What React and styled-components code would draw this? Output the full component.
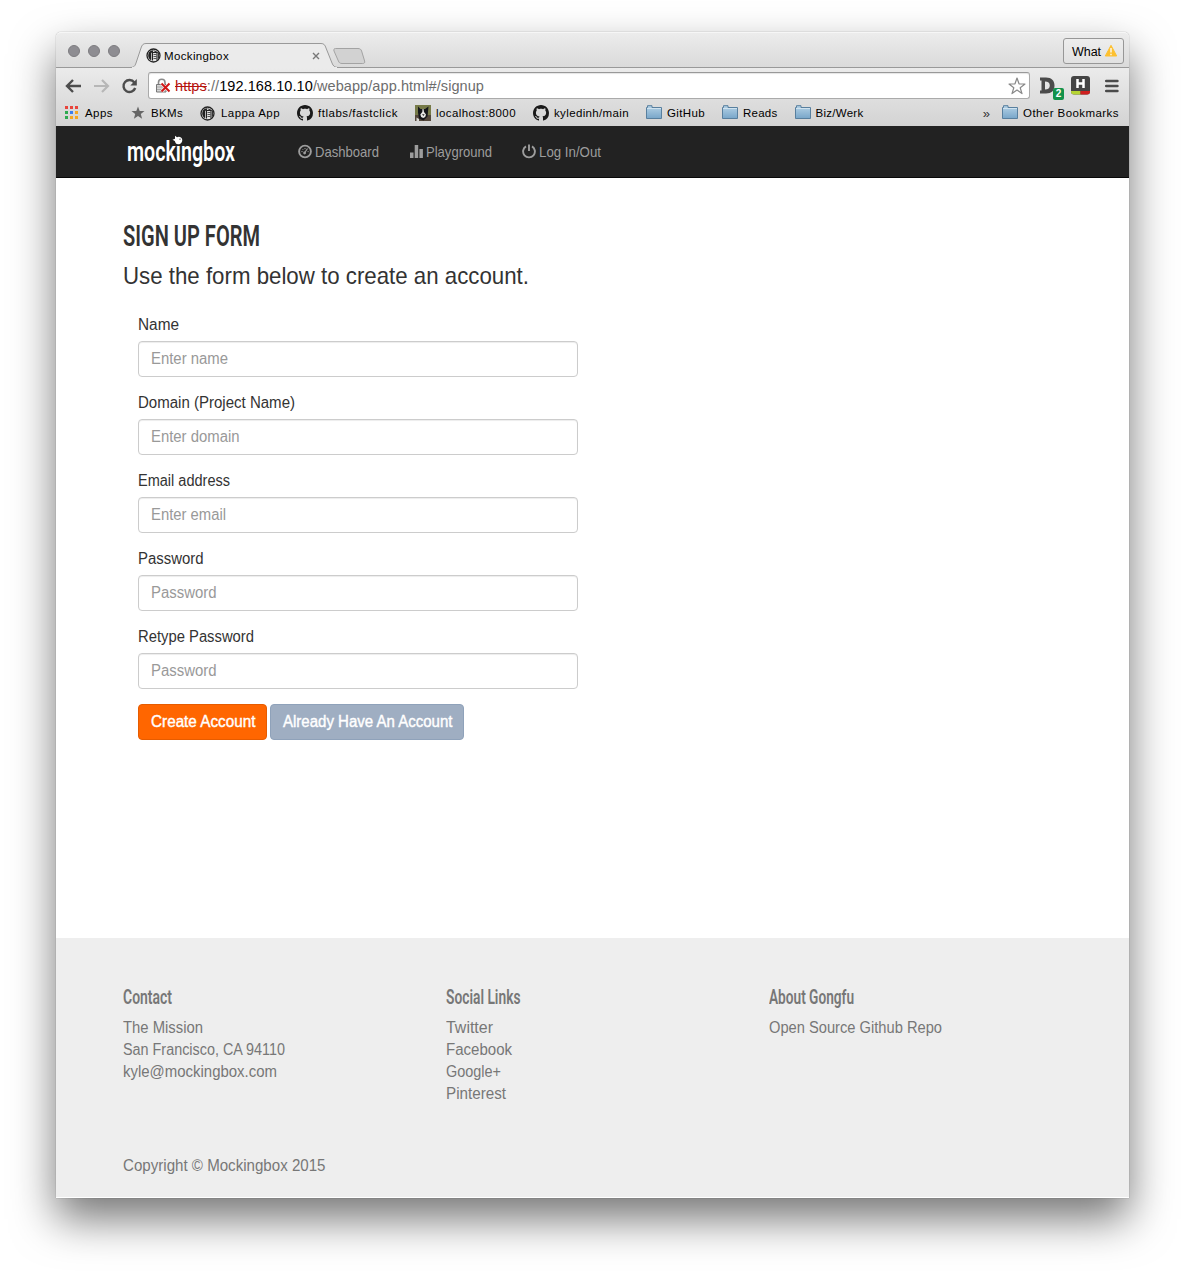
import React, { useLayoutEffect, useRef, useState } from "react";
import styled, { createGlobalStyle } from "styled-components";

const ui = '"Liberation Sans", Arial, sans-serif';
const display = 'Roboto, "Liberation Sans", sans-serif';

const GlobalStyle = createGlobalStyle`
  *, *::before, *::after { box-sizing: border-box; }
  html, body { margin: 0; background: #fff; }
  body { height: 1277px; overflow: hidden; font-family: ${ui}; }
`;

/* Text set to an exact measure, either condensed or tracked */
const Measure = styled.span`
  display: inline-block;
  flex: none;
  white-space: nowrap;
`;
const Glyphs = styled.span`
  display: inline-block;
  transform-origin: 0 50%;
`;
function Fit({ w, track, children, className }) {
  const ref = useRef(null);
  const [style, setStyle] = useState({});
  useLayoutEffect(() => {
    const exact = ref.current.getBoundingClientRect().width;
    const count = ref.current.textContent.length;
    setStyle(track ? { letterSpacing: `${(w - exact) / count}px` } : { transform: `scaleX(${w / exact})` });
  }, [w, track]);
  return (
    <Measure className={className} style={{ width: w }}>
      <Glyphs ref={ref} style={style}>{children}</Glyphs>
    </Measure>
  );
}

const Desktop = styled.div`
  height: 1277px;
  padding: 32px 56px 79px;
  background: #fff;
`;
const Window = styled.div`
  width: 1073px;
  height: 1166px;
  display: flex;
  flex-direction: column;
  border-radius: 5px 5px 0 0;
  background: #fff;
  box-shadow: 0 0 1px rgba(0, 0, 0, 0.55), 0 21px 44px rgba(0, 0, 0, 0.54);
`;

/* Browser chrome */
const Chrome = styled.div`
  height: 94px;
  flex: none;
  border-radius: 5px 5px 0 0;
  border-top: 1px solid #f6f6f6;
  background: linear-gradient(#ececec, #dadada 34px, #ebebeb 35px, #d3d3d3 93px);
  color: #000;
`;
const TabStrip = styled.div`
  height: 35px;
  display: flex;
  align-items: flex-start;
  border-bottom: 1px solid #999;
`;
const Lights = styled.div`
  display: flex;
  gap: 8px;
  padding: 12px 0 0 12px;
  width: 74px;
`;
const Light = styled.i`
  width: 12px;
  height: 12px;
  border-radius: 50%;
  background: #8e8d92;
  border: 1px solid #7d7c80;
`;
const Tab = styled.div`
  position: relative;
  display: flex;
  align-items: center;
  width: 210px;
  height: 35px;
  padding: 11px 0 1px 16px;
  font-size: 11.5px;
  line-height: 16px;
`;
const TabShape = styled.svg`
  position: absolute;
  left: 0;
  top: 10px;
`;
const TabBody = styled.div`
  position: relative;
  display: flex;
  align-items: center;
  gap: 3px;
  svg:last-child { margin-left: 80px; }
`;
const NewTab = styled.svg`
  margin: 14px 0 0 -8px;
`;
const Profile = styled.div`
  display: flex;
  align-items: center;
  gap: 3px;
  width: 61px;
  height: 26px;
  margin: 5px 5px 0 auto;
  padding-left: 8px;
  border: 1px solid #979797;
  border-radius: 3px;
  background: linear-gradient(#ededed, #e1e1e1);
  font-size: 12.5px;
  line-height: 16px;
  padding-top: 1px;
  svg { margin-top: -2px; }
`;
const Toolbar = styled.div`
  height: 35px;
  display: flex;
  align-items: center;
  padding: 0 10px 0 9px;
`;
const NavIcon = styled.svg`
  flex: none;
  margin-right: ${(p) => p.$gap || 0}px;
`;
const Omnibox = styled.div`
  display: flex;
  align-items: center;
  flex: none;
  width: 882px;
  height: 27px;
  padding: 0 3px 0 6px;
  border: 1px solid #aaa;
  border-top-color: #999;
  border-radius: 3px;
  background: #fff;
  box-shadow: inset 0 1px 1px #e5e5e5;
  font-size: 14.5px;
  color: #6d6d6d;
`;
const Lock = styled.svg`
  margin-right: 4px;
`;
const Scheme = styled.span`
  color: #b5130e;
  text-decoration: line-through;
`;
const Host = styled.span`
  color: #000;
`;
const Star = styled.svg`
  margin-left: auto;
`;
const Badge = styled.span`
  flex: none;
  width: 11px;
  height: 12px;
  margin: 17px 7px 0 -4px;
  border-radius: 2px;
  background: #12924a;
  color: #fff;
  font-size: 10px;
  font-weight: 700;
  line-height: 12px;
  text-align: center;
`;
const Bookmarks = styled.div`
  display: flex;
  align-items: center;
  gap: 17px;
  height: 20px;
  padding: 0 10px 0 8px;
  font-size: 11.5px;
`;
const BookmarkItem = styled.div`
  display: flex;
  align-items: center;
  gap: 4px;
`;
const IconSlot = styled.span`
  display: flex;
  align-items: center;
  width: 17px;
  height: 17px;
`;
const Overflow = styled.span`
  margin-left: auto;
  margin-right: -5px;
  font-size: 13px;
  color: #333;
`;

/* Page */
const Navbar = styled.nav`
  height: 52px;
  flex: none;
  display: flex;
  align-items: center;
  padding-left: 71px;
  background: #222;
  border-bottom: 1px solid #080808;
  color: #9d9d9d;
  font-size: 15px;
`;
const Brand = styled.div`
  position: relative;
  width: 171px;
  height: 52px;
  padding-top: 9px;
  color: #fff;
  font-family: ${display};
  font-size: 27px;
  line-height: 34px;
  font-weight: 600;
`;
const Bird = styled.svg`
  position: absolute;
  left: 44px;
  top: 9px;
`;
const NavLink = styled.a`
  display: flex;
  align-items: center;
  gap: 3px;
  margin-right: ${(p) => p.$gap || 0}px;
  line-height: 20px;
  svg { flex: none; }
`;
const Main = styled.main`
  height: 760px;
  flex: none;
  padding: 39px 66px 0 66.5px;
  background: #fff;
  color: #333;
`;
const Title = styled.h1`
  margin: 0;
  font-family: ${display};
  font-size: 30px;
  line-height: 37px;
  font-weight: 600;
`;
const Lead = styled.p`
  margin: 8px 0 0;
  font-size: 24px;
  line-height: 28px;
`;
const Form = styled.div`
  width: 455.5px;
  padding: 24px 0 0 15.5px;
`;
const Group = styled.div`
  margin-bottom: 15px;
`;
const Label = styled.label`
  display: block;
  height: 22px;
  margin: 0 0 5px -0.5px;
  font-size: 16px;
  line-height: 22px;
`;
const Field = styled.div`
  height: 36px;
  padding: 0 11.5px;
  border: 1px solid #ccc;
  border-radius: 4px;
  background: #fff;
  box-shadow: inset 0 1px 1px rgba(0, 0, 0, 0.075);
  color: #999;
  font-size: 16px;
  line-height: 33px;
`;
const Actions = styled.div`
  display: flex;
  gap: 3px;
`;
const Button = styled.div`
  height: 36px;
  padding: 0 11px 0 11.5px;
  border: 1px solid ${(p) => (p.$primary ? "#e65c00" : "#8fa2ba")};
  border-radius: 4px;
  background: ${(p) => (p.$primary ? "#f60" : "#9faec2")};
  color: #fff;
  font-size: 16px;
  line-height: 33px;
  -webkit-text-stroke: 0.4px #fff;
`;
const Footer = styled.footer`
  height: 259px;
  flex: none;
  padding: 46px 66px 0 66.5px;
  background: #eee;
  color: #777;
  font-size: 16px;
  line-height: 22px;
`;
const Columns = styled.div`
  display: grid;
  grid-template-columns: repeat(3, 323.3px);
  height: 171px;
`;
const ColumnTitle = styled.h4`
  height: 27px;
  margin: 0 0 6px;
  font-family: ${display};
  font-size: 19.5px;
  line-height: 27px;
  font-weight: 600;
`;
const Line = styled.div`
  height: 22px;
`;

const Mark = () => (
  <svg width="15" height="15" viewBox="0 0 15 15">
    <circle cx="7.500" cy="7.500" r="6.500" fill="#e4e4e4" stroke="#222" strokeWidth="1.300" />
    <path d="M2.200 7.500a5.300 5.300 0 0 1 4.800-5.300v1.500L5.200 5v7.300A5.300 5.300 0 0 1 2.200 7.500z" fill="#222" />
    <path d="M6.500 12.500v-8h4.500v8" fill="none" stroke="#222" strokeWidth="1.100" />
    <path d="M7.500 6.500h3M7.500 8.500h3M7.500 10.500h3" stroke="#444" strokeWidth=".9" />
    <path d="M7.500 2.700l5 2v6" fill="none" stroke="#222" strokeWidth=".9" />
  </svg>
);
const Folder = () => (
  <svg width="17" height="17" viewBox="0 0 17 17">
    <defs>
      <linearGradient id="folder" x1="0" y1="0" x2="0" y2="1">
        <stop offset="0" stopColor="#b5d2e6" />
        <stop offset="1" stopColor="#78a6c9" />
      </linearGradient>
    </defs>
    <path d="M.5 13.500V2.500h1V.7h4.500v1.800h9.500v11z" fill="url(#folder)" stroke="#587f9e" />
    <path d="M1 3.500h14" stroke="#cfe2ef" />
  </svg>
);
const Octocat = () => (
  <svg width="17" height="17" viewBox="0 0 17 17">
    <path fill="#1a1a1a" d="M8 0C3.58 0 0 3.58 0 8c0 3.54 2.29 6.53 5.47 7.59.4.07.55-.17.55-.38 0-.19-.01-.82-.01-1.49-2.01.37-2.53-.49-2.69-.94-.09-.23-.48-.94-.82-1.13-.28-.15-.68-.52-.01-.53.63-.01 1.08.58 1.23.82.72 1.21 1.87.87 2.33.66.07-.52.28-.87.51-1.07-1.78-.2-3.64-.89-3.64-3.95 0-.87.31-1.59.82-2.15-.08-.2-.36-1.02.08-2.12 0 0 .67-.21 2.2.82.64-.18 1.32-.27 2-.27s1.36.09 2 .27c1.53-1.04 2.2-.82 2.2-.82.44 1.1.16 1.92.08 2.12.51.56.82 1.27.82 2.15 0 3.07-1.87 3.75-3.65 3.95.29.25.54.73.54 1.48 0 1.07-.01 1.93-.01 2.2 0 .21.15.46.55.38A8.01 8.01 0 0 0 16 8c0-4.42-3.58-8-8-8z" />
  </svg>
);
const AppsGrid = () => (
  <svg width="17" height="17" viewBox="0 0 17 17">
    {["#e8453c", "#e8453c", "#e8453c", "#2da94f", "#3a7df0", "#f5a623", "#2da94f", "#f5a623", "#f5a623"].map((c, i) => (
      <rect key={i} x={1 + (i % 3) * 5} y={1 + Math.floor(i / 3) * 5} width="3" height="3" fill={c} />
    ))}
  </svg>
);
const SolidStar = () => (
  <svg width="17" height="17" viewBox="0 0 17 17">
    <path fill="#666" d="M8 1.500l1.700 4.400 4.800.2-3.700 3 1.300 4.600L8 11.100 3.900 13.700l1.300-4.600-3.700-3 4.800-.2z" />
  </svg>
);
const Dog = () => (
  <svg width="17" height="17" viewBox="0 0 17 17">
    <path fill="#767a48" d="M0 0h16v16H0z" />
    <path fill="#54473b" d="M0 10h16v6H0z" />
    <path fill="#15161a" d="M3 1.500l2.500 2.500h4.500l3.500-2.500-.5 5-.5 5-4 4-4.500-2-1-6z" />
    <path fill="#e8e8e6" d="M7.500 4h1l.5 3 2 2.500-.8 2.500-2 1-2-1-.9-2.500 2-2.500z" />
    <path fill="#222" d="M7 9.200h2.600l-1.200 1.900z" />
    <path fill="#d8d8d4" d="M1.500 12.500l2.500 1.500v2H1.500z" />
  </svg>
);

const bookmarks = [
  [AppsGrid, "Apps", 28],
  [SolidStar, "BKMs", 32],
  [Mark, "Lappa App", 59],
  [Octocat, "ftlabs/fastclick", 80],
  [Dog, "localhost:8000", 80],
  [Octocat, "kyledinh/main", 75],
  [Folder, "GitHub", 38],
  [Folder, "Reads", 34.5],
  [Folder, "Biz/Werk", 48],
];

const Bookmark = ({ icon: Icon, text, w }) => (
  <BookmarkItem>
    <IconSlot><Icon /></IconSlot>
    <Fit w={w} track>{text}</Fit>
  </BookmarkItem>
);

const fields = [
  ["Name", 41, "Enter name", 77],
  ["Domain (Project Name)", 157, "Enter domain", 88.5],
  ["Email address", 92, "Enter email", 75],
  ["Password", 65.5, "Password", 65.5],
  ["Retype Password", 116, "Password", 65.5],
];

const columns = [
  ["Contact", 49, [["The Mission", 80], ["San Francisco, CA 94110", 162], ["kyle@mockingbox.com", 154]]],
  ["Social Links", 74.5, [["Twitter", 47], ["Facebook", 66], ["Google+", 55], ["Pinterest", 60]]],
  ["About Gongfu", 85, [["Open Source Github Repo", 173]]],
];

export default function App() {
  return (
    <Desktop>
      <GlobalStyle />
      <Window>
        <Chrome>
          <TabStrip>
            <Lights><Light /><Light /><Light /></Lights>
            <Tab>
              <TabShape width="212" height="25" viewBox="0 0 212 25">
                <path d="M0 24.500C4 24.500 5 23 6 20L11 5C12 2 13 .5 16 .5H191c3 0 4 1.500 5 4.500l6 15c1 3 3 4.500 6 4.500" fill="#ebebeb" stroke="#999" />
                <path d="M2 24.500H207" stroke="#ebebeb" />
              </TabShape>
              <TabBody>
                <Mark />
                <Fit w={65} track>Mockingbox</Fit>
                <svg width="8" height="8" viewBox="0 0 8 8"><path d="M1 1l6 6M7 1L1 7" stroke="#777" strokeWidth="1.400" /></svg>
              </TabBody>
            </Tab>
            <NewTab width="34" height="18" viewBox="0 0 34 18">
              <path d="M3.500 1.500H26c2 0 3 .8 3.600 2.500l3 10c.5 1.800-.3 2.500-2 2.500H10c-2 0-3-.8-3.600-2.500L2 4C1.500 2.500 2 1.500 3.500 1.500z" fill="#d2d2d2" stroke="#a3a3a3" />
            </NewTab>
            <Profile>
              <Fit w={29} track>What</Fit>
              <svg width="14" height="13" viewBox="0 0 14 13">
                <path d="M7 1.300L12.700 12H1.300z" fill="#fdc02f" stroke="#fdc02f" strokeLinejoin="round" />
                <path d="M7 4v4.500M7 9.800v1.500" stroke="#fff" strokeWidth="1.300" />
              </svg>
            </Profile>
          </TabStrip>
          <Toolbar>
            <NavIcon $gap={11} width="17" height="16" viewBox="0 0 17 16">
              <path d="M8 2L2 8l6 6M2.500 8H16" fill="none" stroke="#4d4d4d" strokeWidth="2.400" />
            </NavIcon>
            <NavIcon $gap={11} width="17" height="16" viewBox="0 0 17 16">
              <path d="M9 2l6 6-6 6M14.500 8H1" fill="none" stroke="#b7b7b7" strokeWidth="2.200" />
            </NavIcon>
            <NavIcon $gap={10} width="17" height="16" viewBox="0 0 17 16">
              <path d="M13.300 4.400A6 6 0 1 0 14.200 10" fill="none" stroke="#4d4d4d" strokeWidth="2.400" />
              <path d="M15.800 1v6.500H9.300z" fill="#4d4d4d" />
            </NavIcon>
            <Omnibox>
              <Lock width="16" height="16" viewBox="0 0 16 16">
                <path d="M3.500 7V4.500a3 3 0 0 1 6.500 0V7" fill="none" stroke="#8b8b8b" strokeWidth="1.600" />
                <path d="M1.500 6.500H11V14H1.500z" fill="#d6d6d6" stroke="#777" />
                <path d="M2 9h8M2 11.500h8" stroke="#aaa" />
                <path d="M6.500 5.500l8 8M14.500 5.500l-8 8" stroke="#fff" strokeWidth="3" />
                <path d="M6.500 5.500l8 8M14.500 5.500l-8 8" stroke="#d01717" strokeWidth="2" />
              </Lock>
              <Fit w={309} track><Scheme>https</Scheme>://<Host>192.168.10.10</Host>/webapp/app.html#/signup</Fit>
              <Star width="18" height="18" viewBox="0 0 18 18">
                <path d="M9 1l2 5.800 6 .2-4.800 3.700L14 16.600l-5-3.500-5 3.500 1.800-5.900L1 7l6-.2z" fill="#fff" stroke="#888" strokeWidth="1.200" strokeLinejoin="round" />
              </Star>
            </Omnibox>
            <NavIcon width="27" height="26" viewBox="0 0 27 26">
              <path fillRule="evenodd" fill="#4b4b4b" d="M10 4.500h6c5.500 0 8.500 3 8.500 8s-3 8-8.500 8h-6v-3h1.500v-10H10zM15 8.500v8c3.200 0 4.800-1.500 4.800-4s-1.600-4-4.800-4z" />
            </NavIcon>
            <Badge>2</Badge>
            <NavIcon $gap={14} width="20" height="20" viewBox="0 0 20 20">
              <rect width="19" height="18.500" rx="3" fill="#444" />
              <path d="M0 15h9.500v3.500H3a3 3 0 0 1-3-3z" fill="#b6d433" />
              <path d="M9.500 15H19v.5a3 3 0 0 1-3 3H9.500z" fill="#cf1f1f" />
              <path d="M6.500 3v9M12.500 3v9M6.500 7.500h6" stroke="#fff" strokeWidth="2.500" />
            </NavIcon>
            <NavIcon width="14" height="14" viewBox="0 0 14 14">
              <path d="M1.200 2h11.200M1.200 7h11.200M1.200 12h11.200" stroke="#4b4b4b" strokeWidth="2.600" strokeLinecap="round" />
            </NavIcon>
          </Toolbar>
          <Bookmarks>
            {bookmarks.map(([icon, text, w]) => <Bookmark key={text} icon={icon} text={text} w={w} />)}
            <Overflow>»</Overflow>
            <Bookmark icon={Folder} text="Other Bookmarks" w={96} />
          </Bookmarks>
        </Chrome>

        <Navbar>
          <Brand>
            <Fit w={108}>mockingbox</Fit>
            <Bird width="12" height="11" viewBox="0 0 12 11">
              <path fill="#fff" d="M1.500 4.700L4 3.800 4 .8 6 2.300C7.500 1.200 10.800 1.700 11.200 4.500c.4 2.600-1.400 4.800-4 4.800C4.800 9.300 4.300 7.300 3.800 6z" />
              <circle cx="9" cy="4.200" r=".6" fill="#222" />
            </Bird>
          </Brand>
          <NavLink $gap={31}>
            <svg width="14" height="16" viewBox="0 0 14 16">
              <circle cx="7" cy="7.500" r="5.900" fill="none" stroke="#9d9d9d" strokeWidth="1.900" />
              <path d="M6.500 9L9.500 4.500" stroke="#9d9d9d" strokeWidth="1.200" />
              <circle cx="6.600" cy="9" r="1.400" fill="#9d9d9d" />
              <path d="M3.400 7.600h1.200M4.600 5.200l.8.800M7 4v1.200M9.600 7.600h1" stroke="#9d9d9d" />
            </svg>
            <Fit w={64}>Dashboard</Fit>
          </NavLink>
          <NavLink $gap={30}>
            <svg width="13" height="16" viewBox="0 0 13 16">
              <path d="M0 8.500h3.500V14H0zM4.700 1h3.500v13H4.700zM9.400 5h3.500v9H9.400z" fill="#9d9d9d" />
            </svg>
            <Fit w={66}>Playground</Fit>
          </NavLink>
          <NavLink>
            <svg width="14" height="16" viewBox="0 0 14 16">
              <path d="M4 2.400a5.900 5.900 0 1 0 6 0M7 .5V7" fill="none" stroke="#9d9d9d" strokeWidth="1.900" />
            </svg>
            <Fit w={62}>Log In/Out</Fit>
          </NavLink>
        </Navbar>

        <Main>
          <Title><Fit w={137}>SIGN UP FORM</Fit></Title>
          <Lead><Fit w={406}>Use the form below to create an account.</Fit></Lead>
          <Form>
            {fields.map(([label, lw, hint, hw]) => (
              <Group key={label}>
                <Label><Fit w={lw}>{label}</Fit></Label>
                <Field><Fit w={hw}>{hint}</Fit></Field>
              </Group>
            ))}
            <Actions>
              <Button $primary><Fit w={104.5}>Create Account</Fit></Button>
              <Button><Fit w={169.5}>Already Have An Account</Fit></Button>
            </Actions>
          </Form>
        </Main>

        <Footer>
          <Columns>
            {columns.map(([title, tw, lines]) => (
              <div key={title}>
                <ColumnTitle><Fit w={tw}>{title}</Fit></ColumnTitle>
                {lines.map(([text, w]) => <Line key={text}><Fit w={w}>{text}</Fit></Line>)}
              </div>
            ))}
          </Columns>
          <Line><Fit w={202.5}>Copyright © Mockingbox 2015</Fit></Line>
        </Footer>
      </Window>
    </Desktop>
  );
}
